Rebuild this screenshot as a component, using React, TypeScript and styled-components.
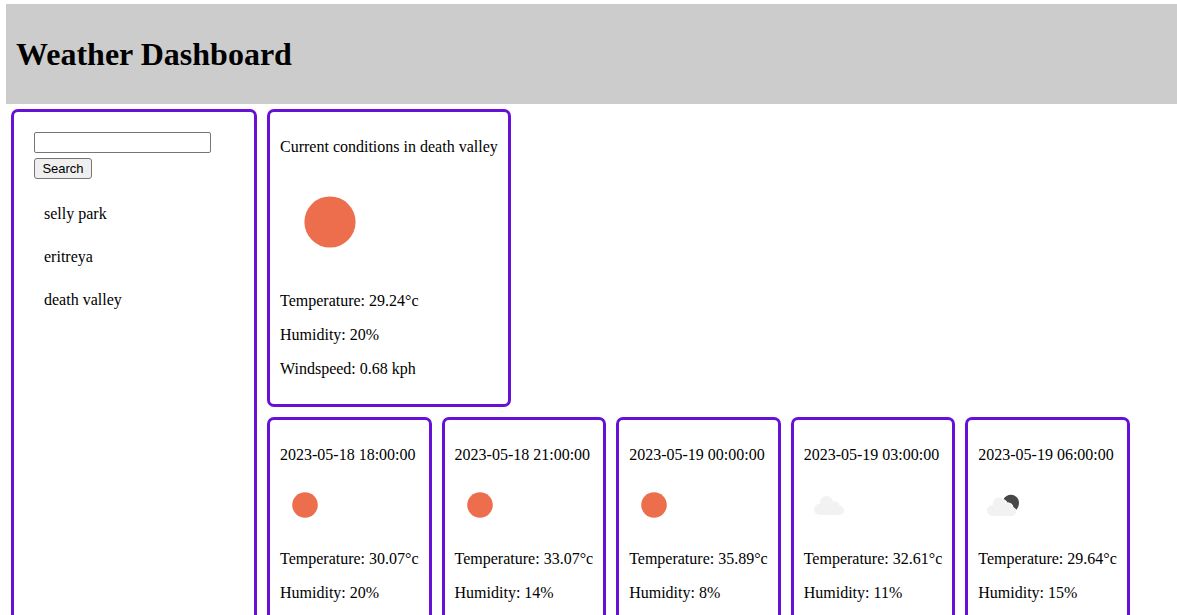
import React from "react";
import styled, { createGlobalStyle } from "styled-components";

const GlobalStyle = createGlobalStyle`
  * {
    box-sizing: border-box;
  }

  body {
    margin: 0;
    background: #ffffff;
    color: #000000;
    font-family: "Liberation Serif", "Times New Roman", serif;
    font-size: 16px;
    line-height: 18px;
  }
`;

const Page = styled.div`
  display: flex;
  flex-direction: column;
  height: 100vh;
  overflow: hidden;
  padding: 4px 0 0 6px;
`;

const Header = styled.header`
  flex: none;
  padding: 32px 10px;
  background: #cccccc;
`;

const Title = styled.h1`
  margin: 0;
  font-size: 32px;
  line-height: 36px;
`;

const Columns = styled.div`
  display: flex;
  flex: none;
`;

const Panel = styled.section<{ $padding?: number; $minHeight?: number }>`
  margin: 5px;
  padding: ${({ $padding = 10 }) => $padding}px;
  min-height: ${({ $minHeight = 0 }) => $minHeight}px;
  border: 3px solid #6610d8;
  border-radius: 7px;
`;

const Sidebar = styled(Panel).attrs({ as: "aside" })`
  flex: 0 0 246px;
`;

const SearchForm = styled.form`
  display: flex;
  flex-direction: column;
  align-items: flex-start;
  gap: 5px;
`;

const SearchInput = styled.input`
  width: 177px;
  height: 21px;
  padding: 1px 2px;
  border: 1px solid #767676;
  border-radius: 2px;
  background: #ffffff;
  font-family: "Liberation Sans", Arial, sans-serif;
  font-size: 13px;
`;

const SearchButton = styled.button`
  width: 58px;
  height: 21px;
  padding: 0;
  border: 1px solid #767676;
  border-radius: 3px;
  background: #efefef;
  color: #000000;
  font-family: "Liberation Sans", Arial, sans-serif;
  font-size: 13px;
  line-height: 16px;
`;

const History = styled.ul`
  display: flex;
  flex-direction: column;
  gap: 5px;
  margin: 16px 0;
  padding: 0;
  list-style: none;
`;

const HistoryItem = styled.li`
  padding: 10px;
`;

const Main = styled.main`
  flex: 1;
  min-width: 0;
`;

const CurrentRow = styled.div`
  display: flex;
`;

const ForecastRow = styled.div`
  display: flex;
  flex-wrap: wrap;
`;

const Line = styled.p`
  margin: 16px 0;
  white-space: nowrap;
`;

const Icon = styled.svg<{ $size: number }>`
  display: block;
  width: ${({ $size }) => $size}px;
  height: ${({ $size }) => $size}px;
  margin-bottom: 20px;
`;

type Sky = "clear" | "clouds" | "broken";

const Cloud = () => (
  <>
    <circle cx="15.6" cy="29.4" r="5.6" />
    <circle cx="22.5" cy="22.3" r="6.3" />
    <circle cx="30.6" cy="26" r="4.8" />
    <circle cx="35.4" cy="30.3" r="4.7" />
    <path d="M15.6 24H34V27H35.4V35H15.6Z" />
  </>
);

const WeatherIcon = ({ sky, size }: { sky: Sky; size: number }) => (
  <Icon $size={size} viewBox="0 0 50 50" aria-hidden="true">
    {sky === "clear" && <circle cx="25" cy="25" r="12.8" fill="#ec6e4c" />}
    {sky === "clouds" && (
      <g fill="#f2f2f2">
        <Cloud />
      </g>
    )}
    {sky === "broken" && (
      <>
        <path
          fill="#48484a"
          d="M25.5 19.2C27 16.4 29.8 14.8 33 14.8C37.5 14.8 41 18.4 41 22.8C41 25.6 40 28 38.3 29.8C37.5 28.8 36.7 28.2 35.5 27.8C35.4 25 33.8 23.2 31.3 22.7C30.8 22.5 29.9 22.6 29.4 22.7C28.9 20.9 27.4 19.5 25.5 19.2Z"
        />
        <g fill="#f2f2f2" transform="translate(-.7 2) scale(.97)">
          <Cloud />
        </g>
      </>
    )}
  </Icon>
);

const searches = ["selly park", "eritreya", "death valley"];

const forecast: { time: string; sky: Sky; temperature: string; humidity: number }[] = [
  { time: "2023-05-18 18:00:00", sky: "clear", temperature: "30.07", humidity: 20 },
  { time: "2023-05-18 21:00:00", sky: "clear", temperature: "33.07", humidity: 14 },
  { time: "2023-05-19 00:00:00", sky: "clear", temperature: "35.89", humidity: 8 },
  { time: "2023-05-19 03:00:00", sky: "clouds", temperature: "32.61", humidity: 11 },
  { time: "2023-05-19 06:00:00", sky: "broken", temperature: "29.64", humidity: 15 },
];

export default function App() {
  return (
    <>
      <GlobalStyle />
      <Page>
        <Header>
          <Title>Weather Dashboard</Title>
        </Header>
        <Columns>
          <Sidebar $padding={20}>
            <SearchForm onSubmit={(event) => event.preventDefault()}>
              <SearchInput type="text" aria-label="City" />
              <SearchButton type="submit">Search</SearchButton>
            </SearchForm>
            <History>
              {searches.map((city) => (
                <HistoryItem key={city}>{city}</HistoryItem>
              ))}
            </History>
          </Sidebar>
          <Main>
            <CurrentRow>
              <Panel>
                <Line>Current conditions in death valley</Line>
                <WeatherIcon sky="clear" size={100} />
                <Line>Temperature: 29.24°c</Line>
                <Line>Humidity: 20%</Line>
                <Line>Windspeed: 0.68 kph</Line>
              </Panel>
            </CurrentRow>
            <ForecastRow>
              {forecast.map(({ time, sky, temperature, humidity }) => (
                <Panel key={time} $minHeight={248}>
                  <Line>{time}</Line>
                  <WeatherIcon sky={sky} size={50} />
                  <Line>Temperature: {temperature}°c</Line>
                  <Line>Humidity: {humidity}%</Line>
                </Panel>
              ))}
            </ForecastRow>
          </Main>
        </Columns>
      </Page>
    </>
  );
}
